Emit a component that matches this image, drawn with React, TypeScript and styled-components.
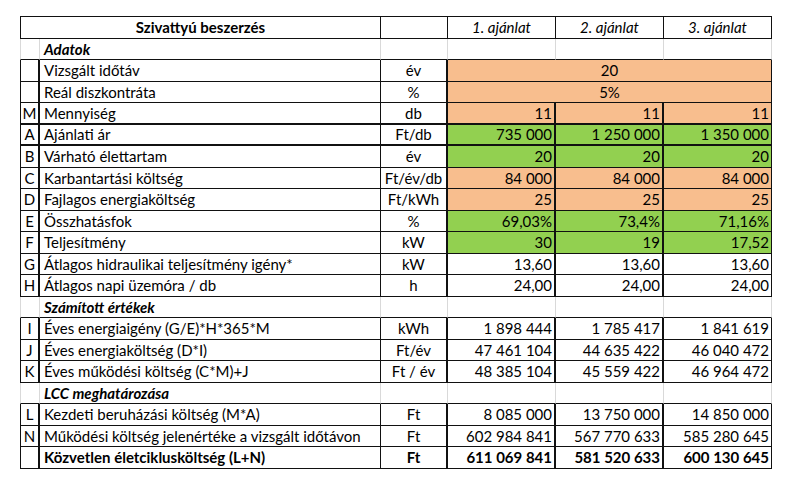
import React from 'react';
import styled, { createGlobalStyle } from "styled-components";

type Fill = 'orange' | 'green' | undefined;

type DataRow = {
    kind: 'data';
    letter: string;
    label: string;
    unit: string;
    values?: string[];
    merged?: string;
    fill?: Fill;
    bold?: boolean;
    thickBottom?: boolean;
};

type SectionRow = { kind: 'section'; label: string };

const n = (s: string) => s.replace(/ /g, '\u00a0');

const rows: (DataRow | SectionRow)[] = [
    { kind: 'section', label: 'Adatok' },
    { kind: 'data', letter: '', label: 'Vizsgált időtáv', unit: 'év', merged: '20', fill: 'orange' },
    { kind: 'data', letter: '', label: 'Reál diszkontráta', unit: '%', merged: '5%', fill: 'orange' },
    { kind: 'data', letter: 'M', label: 'Mennyiség', unit: 'db', values: ['11', '11', '11'], fill: 'orange', thickBottom: true },
    { kind: 'data', letter: 'A', label: 'Ajánlati ár', unit: 'Ft/db', values: ['735 000', '1 250 000', '1 350 000'], fill: 'green', thickBottom: true },
    { kind: 'data', letter: 'B', label: 'Várható élettartam', unit: 'év', values: ['20', '20', '20'], fill: 'green' },
    { kind: 'data', letter: 'C', label: 'Karbantartási költség', unit: 'Ft/év/db', values: ['84 000', '84 000', '84 000'], fill: 'orange' },
    { kind: 'data', letter: 'D', label: 'Fajlagos energiaköltség', unit: 'Ft/kWh', values: ['25', '25', '25'], fill: 'orange' },
    { kind: 'data', letter: 'E', label: 'Összhatásfok', unit: '%', values: ['69,03%', '73,4%', '71,16%'], fill: 'green' },
    { kind: 'data', letter: 'F', label: 'Teljesítmény', unit: 'kW', values: ['30', '19', '17,52'], fill: 'green' },
    { kind: 'data', letter: 'G', label: 'Átlagos hidraulikai teljesítmény igény*', unit: 'kW', values: ['13,60', '13,60', '13,60'] },
    { kind: 'data', letter: 'H', label: 'Átlagos napi üzemóra / db', unit: 'h', values: ['24,00', '24,00', '24,00'] },
    { kind: 'section', label: 'Számított értékek' },
    { kind: 'data', letter: 'I', label: 'Éves energiaigény (G/E)*H*365*M', unit: 'kWh', values: ['1 898 444', '1 785 417', '1 841 619'] },
    { kind: 'data', letter: 'J', label: 'Éves energiaköltség (D*I)', unit: 'Ft/év', values: ['47 461 104', '44 635 422', '46 040 472'] },
    { kind: 'data', letter: 'K', label: 'Éves működési költség (C*M)+J', unit: 'Ft / év', values: ['48 385 104', '45 559 422', '46 964 472'] },
    { kind: 'section', label: 'LCC meghatározása' },
    { kind: 'data', letter: 'L', label: 'Kezdeti beruházási költség (M*A)', unit: 'Ft', values: ['8 085 000', '13 750 000', '14 850 000'] },
    { kind: 'data', letter: 'N', label: 'Működési költség jelenértéke a vizsgált időtávon', unit: 'Ft', values: ['602 984 841', '567 770 633', '585 280 645'] },
    { kind: 'data', letter: '', label: 'Közvetlen életciklusköltség (L+N)', unit: 'Ft', values: ['611 069 841', '581 520 633', '600 130 645'], bold: true },
];

function App() {
    return (
        <Page>
            <GlobalStyle />
            <Sheet>
                <Cell $span={2} $align="center" $bold $left="black" $right="thin">Szivattyú beszerzés</Cell>
                <Cell $right="thin" />
                <Cell $align="center" $italic $right="thin">1. ajánlat</Cell>
                <Cell $align="center" $italic $right="thin">2. ajánlat</Cell>
                <Cell $align="center" $italic $right="thin">3. ajánlat</Cell>

                {rows.map((row, i) => {
                    if (row.kind === 'section') {
                        return (
                            <React.Fragment key={i}>
                                <Cell $left="gray" $right="gray" />
                                <Cell $right="gray" $bold $italic>{row.label}</Cell>
                                <Cell $right="gray" />
                                <Cell $right="gray" />
                                <Cell $right="gray" />
                                <Cell $right="gray" />
                            </React.Fragment>
                        );
                    }
                    return (
                        <React.Fragment key={i}>
                            <Cell $left="black" $right="thick" $align="center" $thickBottom={row.thickBottom}>{row.letter}</Cell>
                            <Cell $right="thin" $bold={row.bold} $thickBottom={row.thickBottom}>{row.label}</Cell>
                            <Cell $right="thick" $align="center" $bold={row.bold} $thickBottom={row.thickBottom}>{row.unit}</Cell>
                            {row.merged ? (
                                <Cell $span={3} $align="center" $fill={row.fill} $right="thin">{row.merged}</Cell>
                            ) : (
                                row.values!.map((v, j) => (
                                    <Cell
                                        key={j}
                                        $align="right"
                                        $fill={row.fill}
                                        $bold={row.bold}
                                        $right={j < 2 ? 'thick' : 'thin'}
                                        $thickBottom={row.thickBottom}
                                    >
                                        {n(v)}
                                    </Cell>
                                ))
                            )}
                        </React.Fragment>
                    );
                })}
            </Sheet>
        </Page>
    );
}

export default App;

const GlobalStyle = createGlobalStyle`
  body {
    margin: 0;
    background: #ffffff;
    font-family: Lato, "Open Sans", sans-serif;
  }
`

const Page = styled.div`
  width: 800px;
  height: 496px;
  padding: 16px 0 0 20px;
  box-sizing: border-box;
`

const Sheet = styled.div`
  display: grid;
  grid-template-columns: 20px 341px 67px 108px 108px 108px;
  grid-auto-rows: 21.5px;
  border-top: 1px solid #111;
  width: max-content;
`

const borderColors = {
    thin: '1px solid #111',
    thick: '2px solid #111',
    gray: '1px solid #d9d9d9',
    black: '1px solid #111',
};

const fills = {
    orange: '#f8be8e',
    green: '#92d050',
};

const Cell = styled.div<{
    $span?: number;
    $align?: 'left' | 'center' | 'right';
    $fill?: Fill;
    $bold?: boolean;
    $italic?: boolean;
    $left?: 'black' | 'gray';
    $right?: 'thin' | 'thick' | 'gray';
    $thickBottom?: boolean;
}>`
  box-sizing: border-box;
  grid-column: span ${p => p.$span ?? 1};
  display: flex;
  align-items: center;
  justify-content: ${p => p.$align === 'center' ? 'center' : p.$align === 'right' ? 'flex-end' : 'flex-start'};
  padding: 1px ${p => p.$align === 'right' ? '2px' : '0'} 0 ${p => p.$align ? '0' : '4px'};
  background: ${p => p.$fill ? fills[p.$fill] : 'transparent'};
  border-bottom: ${p => p.$thickBottom ? '2px' : '1px'} solid #111;
  border-left: ${p => p.$left ? borderColors[p.$left] : 'none'};
  border-right: ${p => p.$right ? borderColors[p.$right] : 'none'};
  font-size: 15px;
  font-weight: ${p => p.$bold ? 700 : 400};
  font-style: ${p => p.$italic ? 'italic' : 'normal'};
  color: #000;
  white-space: nowrap;
  overflow: hidden;
  line-height: 1;
`
